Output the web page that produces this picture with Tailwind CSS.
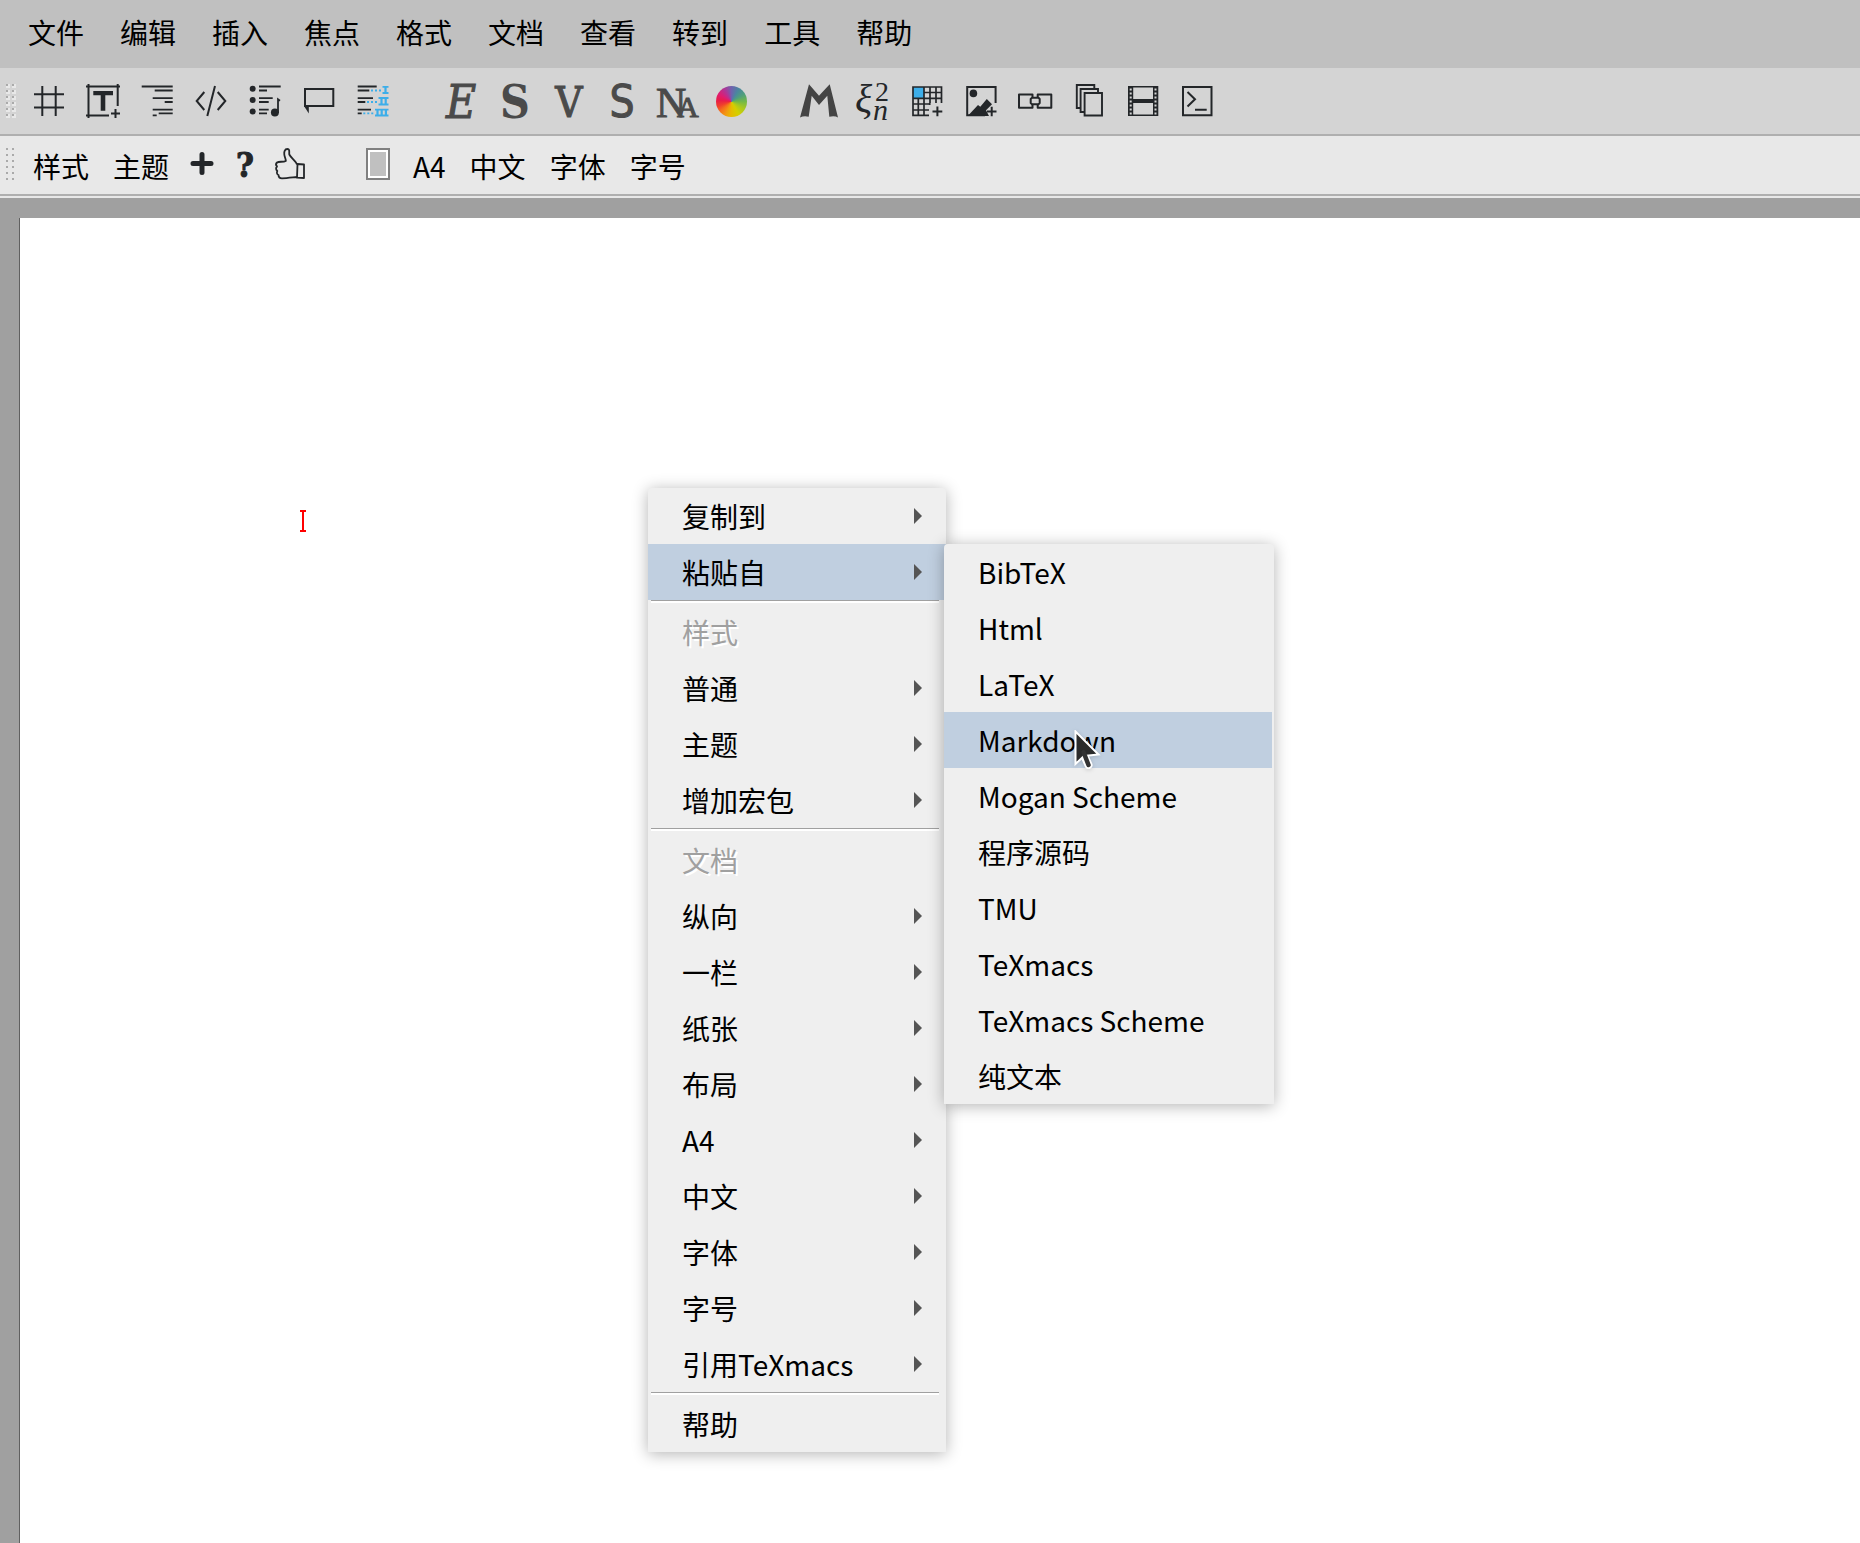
<!DOCTYPE html>
<html lang="zh-CN">
<head>
    <meta charset="utf-8">
    <title>Mogan</title>
    <script src="https://cdn.jsdelivr.net/npm/@tailwindcss/browser@4"></script>
</head>
<body class="min-h-screen flex flex-col bg-[#a0a0a0] text-black text-[28px] font-['Noto_Sans_CJK_SC',sans-serif] overflow-hidden">
    <!-- shared shapes -->
    <svg class="hidden">
        <symbol id="arrow" viewBox="0 0 8 16"><path d="M0 0L8 8L0 16Z" fill="#555" /></symbol>
        <symbol id="grip" viewBox="0 0 10 34">
            <path d="M2 0V34M8 0V34" stroke="#e8e8e8" stroke-width="4" stroke-dasharray="4 2" />
            <path d="M1 0V34M7 0V34" stroke="#aaa" stroke-width="2" stroke-dasharray="2 4" />
        </symbol>
    </svg>

    <nav class="flex items-center gap-9 h-17 pl-7 pb-1 bg-[#c0c0c0]">
        <button>文件</button>
        <button>编辑</button>
        <button>插入</button>
        <button>焦点</button>
        <button>格式</button>
        <button>文档</button>
        <button>查看</button>
        <button>转到</button>
        <button>工具</button>
        <button>帮助</button>
    </nav>

    <div role="toolbar" aria-label="模式" class="flex items-center gap-12 h-17 pl-[6px] bg-[#d4d4d4] border-b-2 border-[#afafaf]">
        <div class="flex items-center gap-[14px] text-[#232629]">
            <svg class="w-[10px] h-[34px] -mr-px"><use href="#grip" /></svg>
            <button aria-label="章节">
                <svg class="size-10" viewBox="0 0 40 40" fill="none" stroke="currentColor" stroke-width="2">
                    <path d="M13.3 5V35M26.7 5V35M5 13.3H35M5 26.5H35" />
                </svg>
            </button>
            <button aria-label="标题">
                <svg class="size-10" viewBox="0 0 40 40" fill="none" stroke="currentColor" stroke-width="2">
                    <path d="M3 5.5H37M5.5 3V37M34.7 3V25M3 34.5H26M28 32.5H37M32.5 28V37" />
                    <path d="M10.3 10H30V14.3H22.3V29.7H17.7V14.3H10.3Z" fill="currentColor" stroke="none" />
                </svg>
            </button>
            <button aria-label="段落">
                <svg class="size-10" viewBox="0 0 40 40" fill="none" stroke="currentColor" stroke-width="1.8">
                    <path d="M4.7 5.5H35.7M17.7 9.5H35.7M15.7 17.2H35.7M27.7 21H35.7M15.7 28.7H35.7M21.7 32.3H35.7M15.7 34.4H19.7" />
                </svg>
            </button>
            <button aria-label="代码">
                <svg class="size-10" viewBox="0 0 40 40" fill="none" stroke="currentColor" stroke-width="2">
                    <path d="M13.3 11L5.7 20L13.3 29M26.7 11L34.3 20L26.7 29M24 5L16.3 35" />
                </svg>
            </button>
            <button aria-label="列表">
                <svg class="size-10" viewBox="0 0 40 40" fill="none" stroke="currentColor" stroke-width="1.8">
                    <path d="M14 5.5H35.7M14 9.5H22M14 17.2H27.7M14 21H23.7M14 28.7H23.7M14 32.3H22M33 32V18.3L35 19.7" />
                    <g fill="currentColor" stroke="none">
                        <circle cx="7.7" cy="7.7" r="3" />
                        <circle cx="7.7" cy="19" r="3" />
                        <circle cx="7.7" cy="30.5" r="3" />
                        <circle cx="29.9" cy="31.5" r="4" />
                    </g>
                </svg>
            </button>
            <button aria-label="批注">
                <svg class="size-10" viewBox="0 0 40 40" fill="none" stroke="currentColor" stroke-width="2">
                    <path d="M6 8H34.3V25H6Z" />
                    <path d="M5 25L9.8 32.5V25Z" fill="currentColor" stroke="none" />
                </svg>
            </button>
            <button aria-label="编号">
                <svg class="size-10" viewBox="0 0 40 40" fill="none" stroke="currentColor" stroke-width="1.8">
                    <path d="M4.7 5.5H23.7M4.7 9.5H16.3M4.7 17.2H20M4.7 21H12.3M4.7 28.7H18M4.7 32.3H8.7" />
                    <g stroke="#3daee9">
                        <path d="M18 9.5H28M14 21H24.5M10.3 32.3H21" stroke-dasharray="2 2" />
                        <path d="M29.5 5.8H35.5M29.5 12H35.5M25.5 17H35.5M25.5 23.5H35.5M22 28.7H35.5M22 34.5H35.5" />
                        <path d="M32.5 6V12M28.5 17V23.5M32.7 17V23.5M24.5 29V34.5M28.7 29V34.5M32.9 29V34.5" stroke-width="2.2" />
                    </g>
                </svg>
            </button>
        </div>

        <div class="flex items-center gap-[14px] text-[#4a4a4a]">
            <button aria-label="强调">
                <svg class="size-10 overflow-visible" viewBox="0 0 40 40" fill="currentColor" stroke="currentColor">
                    <text x="20" y="37" text-anchor="middle" class="text-[46px] italic font-['DejaVu_Serif_Condensed','DejaVu_Serif',serif]">E</text>
                </svg>
            </button>
            <button aria-label="加强">
                <svg class="size-10 overflow-visible" viewBox="0 0 40 40" fill="currentColor">
                    <text x="20" y="37" text-anchor="middle" class="text-[46px] font-bold font-['DejaVu_Serif_Condensed','DejaVu_Serif',serif]">S</text>
                </svg>
            </button>
            <button aria-label="逐字">
                <svg class="size-10 overflow-visible" viewBox="0 0 40 40" fill="currentColor" stroke="currentColor">
                    <text x="20" y="36" text-anchor="middle" class="text-[42px] font-['DejaVu_Serif_Condensed','DejaVu_Serif',serif]">V</text>
                </svg>
            </button>
            <button aria-label="示例">
                <svg class="size-10 overflow-visible" viewBox="0 0 40 40" fill="currentColor" stroke="currentColor">
                    <text x="19" y="36" text-anchor="middle" class="text-[44px] font-['DejaVu_Sans_Condensed','DejaVu_Sans',sans-serif]">S</text>
                </svg>
            </button>
            <button aria-label="姓名">
                <svg class="size-10 overflow-visible" viewBox="0 0 40 40" fill="currentColor" stroke="currentColor">
                    <text x="-1" y="36" class="text-[42px] font-['Liberation_Serif',serif]">N</text>
                    <text x="20" y="36" class="text-[30px] font-['Liberation_Serif',serif]">A</text>
                </svg>
            </button>
            <button aria-label="颜色" class="size-10 flex items-center justify-center">
                <span class="size-[31px] rounded-full bg-[conic-gradient(#6f62ad,#4a86a0_30deg,#4f9f7c_60deg,#72b848_90deg,#a8c820_120deg,#d4d000_150deg,#e6bc00_180deg,#f29a10_205deg,#f4701c_230deg,#f0402c_250deg,#e81c48_275deg,#e01c70_300deg,#b03496_330deg,#6f62ad)]"></span>
            </button>
        </div>

        <div class="flex items-center gap-[14px] text-[#232629]">
            <button aria-label="数学">
                <svg class="size-10" viewBox="0 0 40 40" fill="#444">
                    <path d="M1 36.5L10 3.3L20 14.7L30.7 3.3L39 36.5Q36 34.5 30.3 35.7L28.3 14.7L20 24L12.7 14.7L9.7 35.7Q5 34.3 1 36.5Z" />
                </svg>
            </button>
            <button aria-label="公式">
                <svg class="size-10 overflow-visible" viewBox="0 0 40 40" fill="currentColor">
                    <text x="2" y="31" class="text-[40px] italic font-['Liberation_Serif',serif]">ξ</text>
                    <text x="22" y="20" class="text-[28px] font-['Liberation_Serif',serif]">2</text>
                    <text x="20" y="39" class="text-[30px] italic font-['Liberation_Serif',serif]">n</text>
                </svg>
            </button>
            <button aria-label="表格">
                <svg class="size-10" viewBox="0 0 40 40" fill="none" stroke="currentColor" stroke-width="1.7">
                    <path d="M6 6H17V17H6Z" fill="#3daee9" stroke="none" />
                    <path d="M22 34.3H6V6H34.5V22M17 6V34M23 6V22M29 6V22M17 11.5H34M6 17.3H34M11.3 17V34M6 23H22M6 29H22M22.7 22V24" />
                    <path d="M25.5 30.5H35.3M30.4 25.5V35.3" stroke-width="2" />
                </svg>
            </button>
            <button aria-label="图片">
                <svg class="size-10" viewBox="0 0 40 40" fill="none" stroke="currentColor" stroke-width="2">
                    <path d="M24 34.3H6.2V6H34.6V22M26 30.5H35.5M30.7 25.7V35.3" />
                    <g fill="currentColor" stroke="none">
                        <circle cx="12.4" cy="12.4" r="3.8" />
                        <path d="M6.7 35L17 24L19.3 25.7L25.8 18L31 23.3L25 29.3L28 35Z" />
                    </g>
                </svg>
            </button>
            <button aria-label="链接">
                <svg class="size-10" viewBox="0 0 40 40" fill="none" stroke="currentColor" stroke-width="2" stroke-linejoin="round">
                    <path d="M17.5 16V13.5H4V26.8H17.5V24M22.7 16V13.5H36.3V26.8H22.7V24" />
                    <path d="M17 16.8H23.5L24.7 18V22L23.5 23.2H17L15.7 22V18Z" />
                </svg>
            </button>
            <button aria-label="复制">
                <svg class="size-10" viewBox="0 0 40 40" fill="none" stroke="currentColor" stroke-width="1.9">
                    <path d="M11 27H7.8V4H25.3V7.5M15 31H11.6V8H29V11.5M15.6 12H33V34.5H15.6Z" />
                </svg>
            </button>
            <button aria-label="影片">
                <svg class="size-10" viewBox="0 0 40 40" fill="none" stroke="currentColor" stroke-width="1.6">
                    <path d="M5.8 5.8H34.5V34.3H5.8Z" />
                    <path d="M7.7 5V35M32.5 5V35" stroke-width="5" />
                    <path d="M10 20H30" stroke-width="4" />
                    <path d="M7.7 7.5V34M32.5 7.5V34" stroke="#d4d4d4" stroke-width="2" stroke-dasharray="2 2" />
                </svg>
            </button>
            <button aria-label="会话">
                <svg class="size-10" viewBox="0 0 40 40" fill="none" stroke="currentColor" stroke-width="2">
                    <path d="M6 6H34.5V34.3H6ZM10.5 11L18 18.2L10.5 25.5M18 28.8H29.7" />
                </svg>
            </button>
        </div>
    </div>

    <div role="toolbar" aria-label="焦点" class="flex items-center h-15 pl-[6px] bg-[#e8e8e8] border-b-2 border-[#afafaf]">
        <svg class="w-[10px] h-[34px] mr-[17px]"><use href="#grip" /></svg>
        <div class="flex gap-6 mr-[13px] pt-0.5">
            <button>样式</button>
            <button>主题</button>
        </div>
        <div class="flex gap-1 mr-14 pb-0.5 text-[#232629]">
            <button aria-label="添加">
                <svg class="size-10" viewBox="0 0 40 40" fill="none" stroke="currentColor" stroke-width="5" stroke-linecap="round">
                    <path d="M20 10.5V28.5M11 19.5H29" />
                </svg>
            </button>
            <button aria-label="帮助">
                <svg class="size-10 overflow-visible" viewBox="0 0 40 40" fill="currentColor" stroke="currentColor">
                    <text x="19" y="33" text-anchor="middle" class="text-[34px] font-bold font-['DejaVu_Serif_Condensed','DejaVu_Serif',serif]">?</text>
                </svg>
            </button>
            <button aria-label="赞">
                <svg class="size-10" viewBox="0 0 40 40" fill="none" stroke="currentColor" stroke-width="1.8" stroke-linejoin="round">
                    <path d="M27 20.5C26 17 21 14 19.3 10.5C19 8 20 5 17.5 5C14.5 5 14 8 14.3 10.5C14.5 13 16 15 15.8 17C13 18.5 9 17 7 18.5C5.5 20 6 21.5 7 22.5C5.5 24 6 26 7.3 27C6.5 28.5 7 30.5 8.5 31C8.500 33 10 34.3 12 34.3C17 34.3 22 33.5 27 33" />
                    <path d="M27.5 20L34 20.5V34L27 33.7Z" />
                </svg>
            </button>
        </div>
        <button aria-label="页面颜色" class="w-6 h-8 mr-[23px] mb-0.5 bg-[#c0c0c0] border-2 border-[#808080] shadow-[inset_0_0_0_2px_#fff]"></button>
        <div class="flex gap-6 pt-0.5">
            <button>A4</button>
            <button>中文</button>
            <button>字体</button>
            <button>字号</button>
        </div>
    </div>

    <main class="relative grow flex flex-col pl-[19px] pt-5 border-t-2 border-[#e8e8e8]">
        <div class="grow bg-white border-l border-[#606060]"></div>

        <!-- text caret -->
        <svg class="absolute left-[300px] top-[311px] w-[6px] h-[24px]" viewBox="0 0 6 24" fill="none" stroke="#f00" stroke-width="2">
            <path d="M0 2H6M0 22H6M3 2V22" />
        </svg>

        <div role="menu" class="absolute left-[648px] top-[290px] w-[298px] flex flex-col bg-[#efefef] rounded-t-sm shadow-[0_2px_16px_rgba(0,0,0,0.3)]">
            <button role="menuitem" class="flex items-center justify-between h-14 pl-[34px] pr-6">复制到<svg class="w-2 h-4"><use href="#arrow" /></svg></button>
            <button role="menuitem" class="flex items-center justify-between h-14 pl-[34px] pr-6 bg-[#c0cfe0]">粘贴自<svg class="w-2 h-4"><use href="#arrow" /></svg></button>
            <hr class="h-1 ml-[3px] mr-[7px] border-t border-[#a0a0a0] shadow-[inset_0_2px_0_#fff]">
            <button role="menuitem" disabled class="flex items-center h-14 pl-[34px] text-[#a0a0a0] [text-shadow:2px_2px_0_#fff]">样式</button>
            <button role="menuitem" class="flex items-center justify-between h-14 pl-[34px] pr-6">普通<svg class="w-2 h-4"><use href="#arrow" /></svg></button>
            <button role="menuitem" class="flex items-center justify-between h-14 pl-[34px] pr-6">主题<svg class="w-2 h-4"><use href="#arrow" /></svg></button>
            <button role="menuitem" class="flex items-center justify-between h-14 pl-[34px] pr-6">增加宏包<svg class="w-2 h-4"><use href="#arrow" /></svg></button>
            <hr class="h-1 ml-[3px] mr-[7px] border-t border-[#a0a0a0] shadow-[inset_0_2px_0_#fff]">
            <button role="menuitem" disabled class="flex items-center h-14 pl-[34px] text-[#a0a0a0] [text-shadow:2px_2px_0_#fff]">文档</button>
            <button role="menuitem" class="flex items-center justify-between h-14 pl-[34px] pr-6">纵向<svg class="w-2 h-4"><use href="#arrow" /></svg></button>
            <button role="menuitem" class="flex items-center justify-between h-14 pl-[34px] pr-6">一栏<svg class="w-2 h-4"><use href="#arrow" /></svg></button>
            <button role="menuitem" class="flex items-center justify-between h-14 pl-[34px] pr-6">纸张<svg class="w-2 h-4"><use href="#arrow" /></svg></button>
            <button role="menuitem" class="flex items-center justify-between h-14 pl-[34px] pr-6">布局<svg class="w-2 h-4"><use href="#arrow" /></svg></button>
            <button role="menuitem" class="flex items-center justify-between h-14 pl-[34px] pr-6">A4<svg class="w-2 h-4"><use href="#arrow" /></svg></button>
            <button role="menuitem" class="flex items-center justify-between h-14 pl-[34px] pr-6">中文<svg class="w-2 h-4"><use href="#arrow" /></svg></button>
            <button role="menuitem" class="flex items-center justify-between h-14 pl-[34px] pr-6">字体<svg class="w-2 h-4"><use href="#arrow" /></svg></button>
            <button role="menuitem" class="flex items-center justify-between h-14 pl-[34px] pr-6">字号<svg class="w-2 h-4"><use href="#arrow" /></svg></button>
            <button role="menuitem" class="flex items-center justify-between h-14 pl-[34px] pr-6">引用TeXmacs<svg class="w-2 h-4"><use href="#arrow" /></svg></button>
            <hr class="h-1 ml-[3px] mr-[7px] border-t border-[#a0a0a0] shadow-[inset_0_2px_0_#fff]">
            <button role="menuitem" class="flex items-center h-14 pl-[34px]">帮助</button>
        </div>

        <div role="menu" class="absolute left-[944px] top-[346px] w-[330px] flex flex-col pr-0.5 bg-[#efefef] rounded-t-sm shadow-[0_2px_16px_rgba(0,0,0,0.3)]">
            <button role="menuitem" class="flex items-center h-14 pl-[34px]">BibTeX</button>
            <button role="menuitem" class="flex items-center h-14 pl-[34px]">Html</button>
            <button role="menuitem" class="flex items-center h-14 pl-[34px]">LaTeX</button>
            <button role="menuitem" class="flex items-center h-14 pl-[34px] bg-[#c0cfe0]">Markdown</button>
            <button role="menuitem" class="flex items-center h-14 pl-[34px]">Mogan Scheme</button>
            <button role="menuitem" class="flex items-center h-14 pl-[34px]">程序源码</button>
            <button role="menuitem" class="flex items-center h-14 pl-[34px]">TMU</button>
            <button role="menuitem" class="flex items-center h-14 pl-[34px]">TeXmacs</button>
            <button role="menuitem" class="flex items-center h-14 pl-[34px]">TeXmacs Scheme</button>
            <button role="menuitem" class="flex items-center h-14 pl-[34px]">纯文本</button>
        </div>

        <!-- mouse pointer -->
        <svg class="absolute left-[1074px] top-[532px] w-7 h-10 drop-shadow-sm" viewBox="0 0 28 40">
            <path d="M9.5 24L14.5 35" stroke="#fff" stroke-width="8" stroke-linecap="round" />
            <path d="M1.5 1.5V34L10 26L24.5 24.5Z" fill="#2b2b2b" stroke="#fff" stroke-width="2" />
            <path d="M9.5 22L14.5 35" stroke="#333" stroke-width="4.5" stroke-linecap="round" />
        </svg>
    </main>
</body>
</html>
